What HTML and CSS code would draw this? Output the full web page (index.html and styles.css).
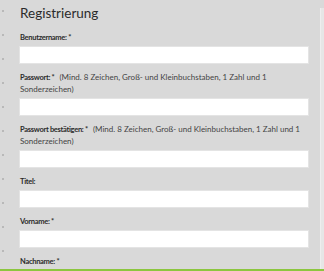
FILE: index.html
```html
<!DOCTYPE html>
<html lang="de">

<head>
    <meta charset="UTF-8">
    <meta name="viewport" content="width=device-width, initial-scale=1.0">
    <title>Registrierung</title>
    <link rel="stylesheet" href="styles.css">
</head>

<body>
    <div class="page">
        <div class="gutter"></div>
        <main class="form">
            <h1>Registrierung</h1>
            <div class="field">
                <label for="benutzername"><strong>Benutzername: *</strong></label>
                <input type="text" id="benutzername">
            </div>
            <div class="field">
                <label for="passwort"><strong>Passwort: *</strong> <span class="hint">(Mind. 8 Zeichen, Groß- und Kleinbuchstaben, 1 Zahl und 1 Sonderzeichen)</span></label>
                <input type="password" id="passwort">
            </div>
            <div class="field">
                <label for="passwort2"><strong>Passwort bestätigen: *</strong> <span class="hint">(Mind. 8 Zeichen, Groß- und Kleinbuchstaben, 1 Zahl und 1 Sonderzeichen)</span></label>
                <input type="password" id="passwort2">
            </div>
            <div class="field">
                <label for="titel"><strong>Titel:</strong></label>
                <input type="text" id="titel">
            </div>
            <div class="field">
                <label for="vorname"><strong>Vorname: *</strong></label>
                <input type="text" id="vorname">
            </div>
            <div class="field">
                <label for="nachname"><strong>Nachname: *</strong></label>
                <input type="text" id="nachname">
            </div>
        </main>
        <aside class="side"></aside>
    </div>
    <div class="bottom-line"></div>
</body>

</html>
```

FILE: styles.css
```css
body {
    font-family: Lato, "Open Sans", sans-serif;
    margin: 0;
    background-color: #d9d9d9;
    color: #333;
    overflow: hidden;
}

.page {
    display: flex;
    align-items: flex-start;
}

.gutter {
    width: 19px;
    flex-shrink: 0;
    align-self: stretch;
    background-image: radial-gradient(circle, #b8b8b8 0.7px, transparent 1px);
    background-size: 6px 24px;
    background-position: 0 -1px;
    background-repeat: repeat-y;
}

.form {
    width: 290px;
    flex-shrink: 0;
    padding-top: 4px;
}

h1 {
    font-size: 13.5px;
    font-weight: normal;
    line-height: 18px;
    margin: 0 0 9px 1px;
    color: #2b2b2b;
}

.field {
    display: flex;
    flex-direction: column;
    margin-bottom: 7px;
}

label {
    display: block;
    font-size: 8px;
    line-height: 12px;
    margin: 0 0 3px 1px;
    color: #2b2b2b;
}

label strong {
    font-size: 7.5px;
    font-weight: bold;
    letter-spacing: -0.3px;
    line-height: 1;
}

.hint {
    color: #444;
    margin-left: 3px;
    line-height: 1;
}

input {
    box-sizing: border-box;
    height: 18px;
    width: 100%;
    margin: 0;
    border: 1px solid #e4e4e4;
    background-color: #fff;
    outline: none;
}

.side {
    margin: 8px 0 0 11px;
    width: 4px;
    height: 400px;
    background-color: #e6e6e6;
    border-left: 1px solid #eeeeee;
}

.bottom-line {
    position: fixed;
    left: 0;
    right: 0;
    bottom: 0;
    height: 2px;
    background-color: #8cc63f;
}
```
